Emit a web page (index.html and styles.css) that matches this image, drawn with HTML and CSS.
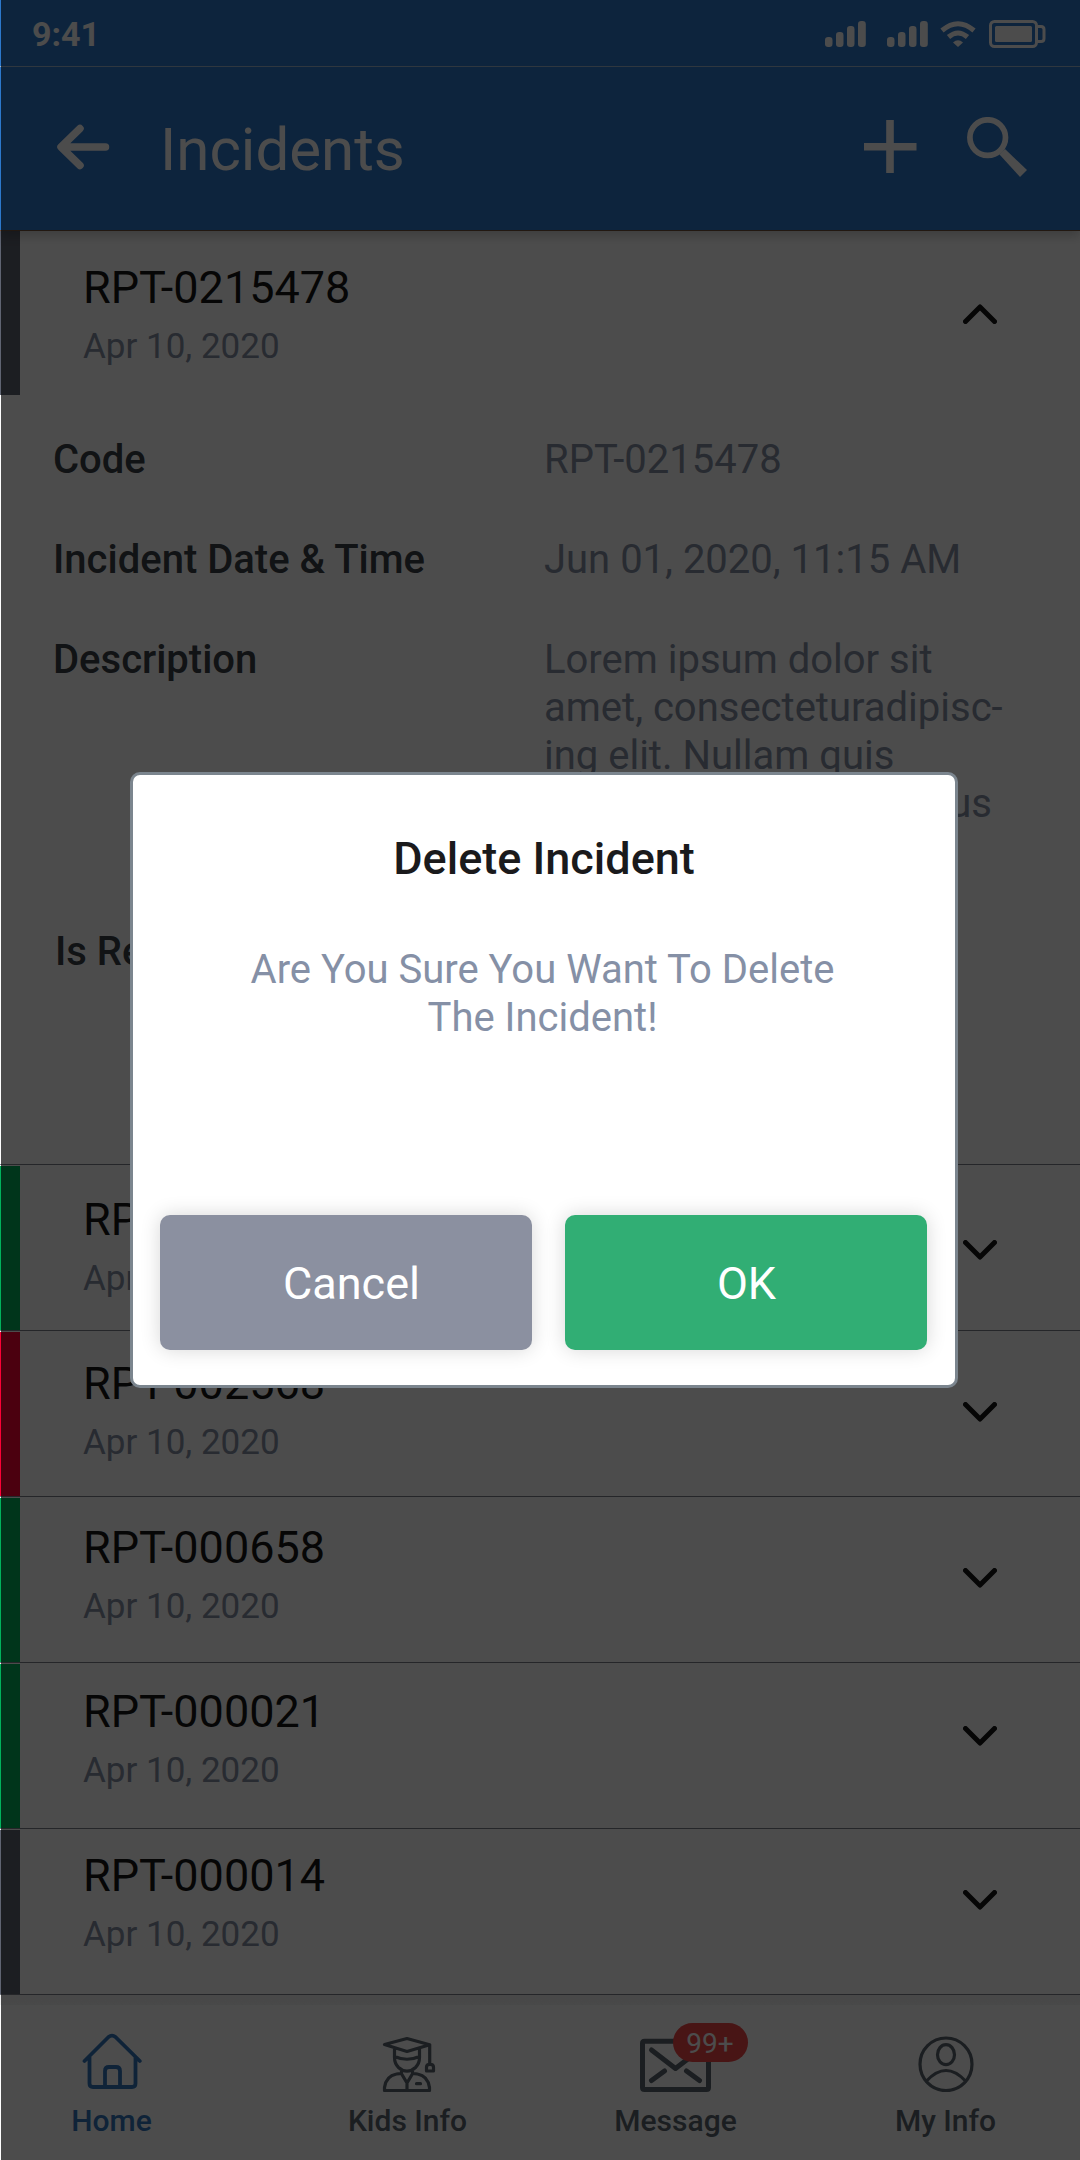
FILE: index.html
```html
<!DOCTYPE html>
<html lang="en">
<head>
<meta charset="utf-8">
<title>Incidents</title>
<link rel="stylesheet" href="styles.css">
</head>
<body>
<svg class="defs" width="0" height="0">
  <symbol id="down" viewBox="0 0 34 20"><path d="M2.5 2.5 17 17 31.5 2.5"/></symbol>
  <symbol id="up" viewBox="0 0 34 20"><path d="M2.5 17.5 17 3 31.5 17.5"/></symbol>
  <symbol id="signal" viewBox="0 0 41 26"><rect y="16" width="7.5" height="10" rx="3.2"/><rect x="11" y="11" width="7.5" height="15" rx="3.2"/><rect x="22" y="5" width="7.5" height="21" rx="3.2"/><rect x="33" width="7.8" height="26" rx="3.2"/></symbol>
</svg>
<div class="app">
  <header>
    <div class="status">
      <span class="clock">9:41</span>
      <svg class="signal" width="41" height="26"><use href="#signal"/></svg>
      <svg class="signal second" width="41" height="26"><use href="#signal"/></svg>
      <svg class="wifi" width="36" height="26" viewBox="0 0 36 26"><path d="M2 9.5Q18-4 34 9.5M8.500 16Q18 8 27.500 16" fill="none" stroke="#fff" stroke-width="5"/><path d="M13 21.500Q18 17 23 21.500L18 26z" fill="#fff"/></svg>
      <svg width="57" height="28" viewBox="0 0 57 28"><rect x="1.500" y="1.500" width="46" height="25" rx="4" fill="none" stroke="#fff" stroke-width="3"/><rect x="6" y="6" width="37" height="16" rx="1.500" fill="#fff"/><path d="M48 6.500h4q3 0 3 3v9q0 3-3 3h-4" fill="none" stroke="#fff" stroke-width="3"/></svg>
    </div>
    <div class="appbar">
      <svg width="53" height="46" viewBox="0 0 53 46"><path d="M48.500 23H4.500M23 4.500 4 23 23 41.500" fill="none" stroke="#fff" stroke-width="7.500" stroke-linecap="round" stroke-linejoin="round"/></svg>
      <h1>Incidents</h1>
      <svg class="plus" width="53" height="53" viewBox="0 0 53 53"><path d="M22.200 0h7.600v23h22.700v7.600H29.800V53h-7.600V30.600H0V23h22.200z" fill="#fff"/></svg>
      <svg width="60" height="60" viewBox="0 0 60 60"><circle cx="20.700" cy="20.600" r="17.800" fill="none" stroke="#fff" stroke-width="5.700"/><path d="M32.500 37.500 38 32 60 53 53 60z" fill="#fff"/></svg>
    </div>
  </header>
  <main>
    <section class="row open slate">
      <div class="text"><h2>RPT-0215478</h2><p>Apr 10, 2020</p></div>
      <svg class="chevron" width="34" height="20"><use href="#up"/></svg>
    </section>
    <dl class="details">
      <dt>Code</dt><dd>RPT-0215478</dd>
      <dt>Incident Date &amp; Time</dt><dd>Jun 01, 2020, 11:15 AM</dd>
      <dt>Description</dt><dd>Lorem ipsum dolor sit<br>amet, consecteturadipisc-<br>ing elit. Nullam quis<span class="justified">lorem eu felis faucibus</span>tempus.</dd>
      <dt class="resolved">Is Resolved</dt><dd>No</dd>
    </dl>
    <section class="row green">
      <div class="text"><h2>RPT-002569</h2><p>Apr 10, 2020</p></div>
      <svg class="chevron" width="34" height="20"><use href="#down"/></svg>
    </section>
    <section class="row red">
      <div class="text"><h2>RPT-002568</h2><p>Apr 10, 2020</p></div>
      <svg class="chevron" width="34" height="20"><use href="#down"/></svg>
    </section>
    <section class="row green">
      <div class="text"><h2>RPT-000658</h2><p>Apr 10, 2020</p></div>
      <svg class="chevron" width="34" height="20"><use href="#down"/></svg>
    </section>
    <section class="row green">
      <div class="text"><h2>RPT-000021</h2><p>Apr 10, 2020</p></div>
      <svg class="chevron" width="34" height="20"><use href="#down"/></svg>
    </section>
    <section class="row slate">
      <div class="text"><h2>RPT-000014</h2><p>Apr 10, 2020</p></div>
      <svg class="chevron" width="34" height="20"><use href="#down"/></svg>
    </section>
  </main>
  <nav>
    <a class="tab home">
      <svg width="60" height="60" viewBox="22 22 60 60"><path d="M24.500 51 48.500 27Q52 24.300 55.500 27L79.800 51M29.500 47v26.500q0 3.500 3.500 3.500h39q3.500 0 3.500-3.500V47M45 76V61q0-4 4-4h7q4 0 4 4v15"/></svg>
      <span>Home</span>
    </a>
    <a class="tab">
      <svg class="kid" width="60" height="60" viewBox="318 22 60 60"><path d="M324.500 34.500 347 28.500 369.700 34.700 347 41.500zM369.700 35v19.500M366.500 61v-4q0-2.700 3.500-2.700t3.500 2.700v4zM334.500 39v8.500q0 6 4 10 4 3.700 8.500 3.700t8.500-3.700q4-4 4-10V39M334.500 46.500q12.500 5.500 25 0M341.500 60v4M352.500 60v4M324.500 80.500v-3q1.500-11.500 12-13.500 3-.7 5-.3L347 73l5.500-9.300q2-.4 5 .3 10.500 2 12 13.500v3zM347 73v7.500M356.500 73.700h4"/></svg>
      <span>Kids Info</span>
    </a>
    <a class="tab message">
      <svg width="71" height="60" viewBox="640 2032 71 60"><path d="M644.500 2041.200h62q2 0 2 2v44.300q0 2-2 2h-62q-2 0-2-2v-44.300q0-2 2-2zM651.500 2050l24 18.500 24-18.500M651.500 2080.500l13-9.500M686.500 2071l13 9.500"/></svg>
      <b class="badge">99+</b>
      <span>Message</span>
    </a>
    <a class="tab">
      <svg class="user" width="60" height="60" viewBox="916.500 2032 60 60"><ellipse cx="946.500" cy="2064.300" rx="26" ry="26.300"/><ellipse cx="946.500" cy="2054.700" rx="8.500" ry="10"/><path d="M927 2081q19.500-21 39 0"/></svg>
      <span>My Info</span>
    </a>
  </nav>
</div>
<div class="overlay">
  <div class="modal">
    <h3>Delete Incident</h3>
    <p>Are You Sure You Want To Delete<br>The Incident!</p>
    <div class="actions">
      <button class="cancel">Cancel</button>
      <button class="ok">OK</button>
    </div>
  </div>
</div>
</body>
</html>
```

FILE: styles.css
```css
* { box-sizing: border-box; margin: 0; padding: 0; }
body { width: 1080px; height: 2160px; overflow: hidden; background: #fff; font-family: Roboto, sans-serif; }
.defs { display: none; }
svg { display: block; flex: none; }
.app { height: 2160px; display: flex; flex-direction: column; }

header { position: relative; height: 231px; background: #2c78cb; color: #fff; border-bottom: 1px solid #73503a; box-shadow: 0 5px 10px rgba(0,0,0,.2); }
.status { height: 67px; border-bottom: 1px solid #9fb7d2; display: flex; align-items: center; padding: 2px 34px 0 32px; }
.clock { font-size: 34px; font-weight: 700; margin-right: auto; }
.signal { fill: #fff; }
.second { margin-left: 21px; }
.wifi { margin: 0 13px 0 12px; }
.appbar { height: 163px; display: flex; align-items: center; padding: 0 53px 4px 57px; }
h1 { font-size: 60px; font-weight: 400; line-height: 70px; margin: 6px auto 0 50px; }
.plus { margin-right: 50px; }

main { display: flex; flex-direction: column; }
.row { position: relative; height: 166px; display: flex; border-top: 1px solid #7c818b; padding: 1px 83px 0 0; }
.row::before { content: ""; width: 20px; height: 164px; background: var(--bar); }
.row.open { position: static; height: 164px; border: 0; padding-top: 0; }
.slate { --bar: #5f6472; }
.green { --bar: #00b25c; }
.red { --bar: #fc0035; }
.text { margin-left: 63px; padding-top: var(--text-top); }
.chevron { margin: var(--chev-top) 0 0 auto; fill: none; stroke: #161616; stroke-width: 5; stroke-linecap: round; stroke-linejoin: round; }
.row:nth-child(1) { --text-top: 30px; --chev-top: 73px; }
.row:nth-child(3) { --text-top: 27px; --chev-top: 74px; }
.row:nth-child(4) { --text-top: 25px; --chev-top: 70px; }
.row:nth-child(5) { --text-top: 23px; --chev-top: 70px; }
.row:nth-child(6) { --text-top: 21px; --chev-top: 62px; }
.row:nth-child(7) { --text-top: 19px; --chev-top: 60px; }
h2 { font-size: 45px; font-weight: 400; line-height: 54px; color: #161616; }
.text p { font-size: 35px; line-height: 42px; margin-top: 11px; color: #8590a6; }

.details { height: 769px; padding: 41px 0 0 53px; display: grid; grid-template-columns: 491px 1fr; align-content: start; row-gap: 52px; font-size: 40px; line-height: 48px; }
dt { font-weight: 500; color: #3a4046; }
dd { color: #8590a6; }
.justified { display: block; width: 448px; text-align: justify; text-align-last: justify; }
.resolved { padding-left: 2px; }

nav { flex: 1; border-top: 1px solid #7c818b; padding: 37px 0 0 41.5px; display: flex; gap: 129px; background: linear-gradient(#f1f1f1, #f3f3f3 10px, #fff 10px); color: #5b666f; }
.tab { position: relative; width: 140px; display: flex; flex-direction: column; align-items: center; gap: 11px; font-size: 30px; line-height: 36px; font-weight: 500; white-space: nowrap; }
.tab svg { fill: none; stroke: currentColor; stroke-width: 3.2; stroke-linecap: round; stroke-linejoin: round; }
.home { color: #3376bd; margin-right: 27px; }
.home svg { stroke-width: 3.8; }
.message { margin: 0 1px 0 -1px; }
.message svg { stroke-width: 5; }
.badge { position: absolute; left: 67px; top: -9px; width: 75px; height: 39px; border-radius: 20px; background: #f04747; color: #fff; font-size: 28px; font-weight: 400; line-height: 41px; text-align: center; }

.overlay { position: fixed; inset: 0 0 0 1px; background: rgba(0,0,0,.7); display: flex; align-items: center; justify-content: center; }
.modal { width: 828px; height: 616px; margin-left: 7px; background: #fff; border: 3px solid #7b858e; border-radius: 10px; padding: 57px 27px 0; text-align: center; }
h3 { font-size: 45px; font-weight: 500; line-height: 54px; color: #1a1a1c; }
.modal p { font-size: 40px; line-height: 48px; color: #8590a6; margin: 60px 3px 0 0; }
.actions { display: flex; gap: 33px; margin-top: 173px; }
button { height: 135px; border: 0; border-radius: 10px; font: 45px Roboto, sans-serif; color: #fff; box-shadow: 0 0 20px rgba(0,0,0,.16); }
.cancel { width: 372px; padding: 2px 0 0 11px; background: #8b90a0; }
.ok { width: 362px; padding: 2px 0 0 1px; background: #31ae74; }
```
